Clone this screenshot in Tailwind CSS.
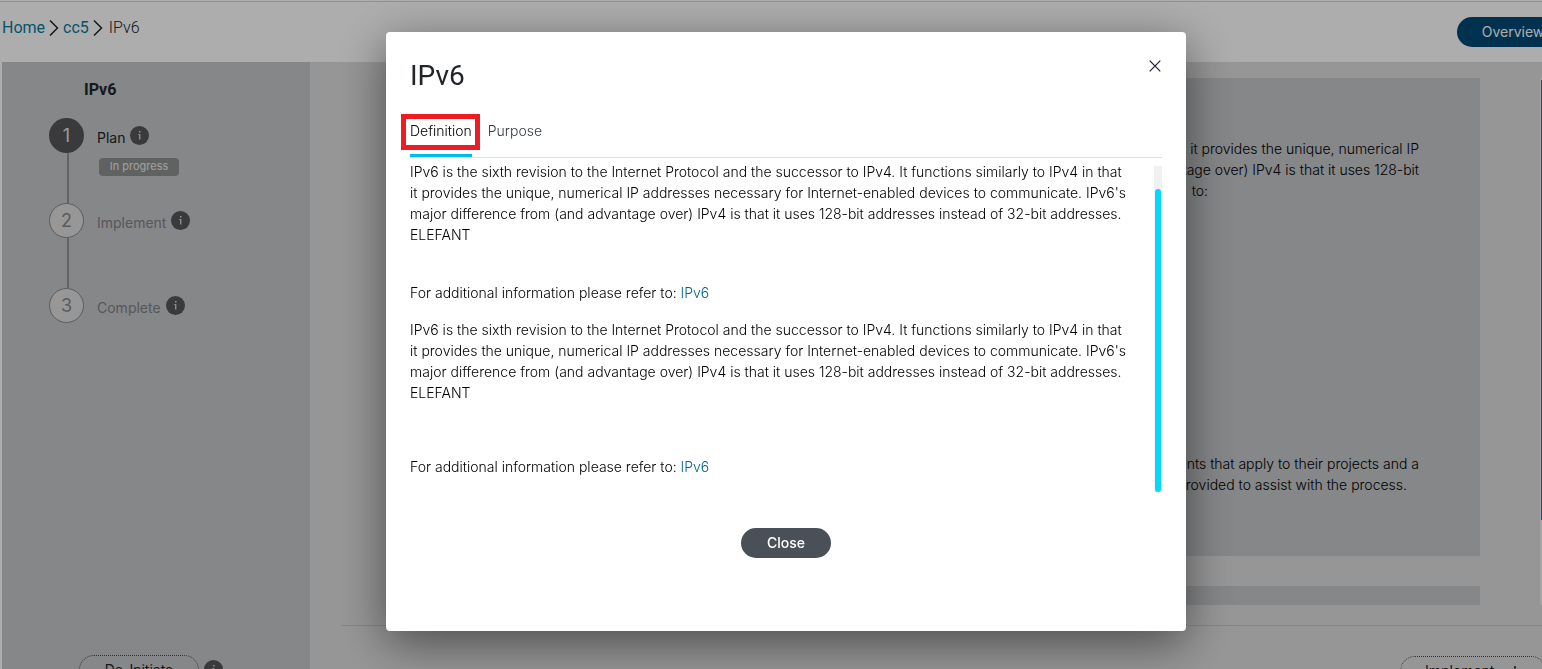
<!DOCTYPE html>
<html lang="en">
<head>
<meta charset="utf-8">
<title>IPv6</title>
<script src="https://cdn.jsdelivr.net/npm/@tailwindcss/browser@4"></script>
</head>
<body class="h-screen overflow-hidden bg-white font-['Inter',sans-serif] text-sm text-[#212529]">
<svg class="hidden">
  <symbol id="info" viewBox="0 0 19 19">
    <circle cx="9.5" cy="9.5" r="9.5" fill="#56565a"/>
    <path d="M9 5h1.6v1.6H9zM8.2 8h2.2v5.4H9V9h-.8z" fill="#d0d0d0"/>
  </symbol>
</svg>

<div class="flex h-screen flex-col overflow-hidden">
  <header class="mt-px flex h-[61px] shrink-0 items-start justify-between border-t border-[#d8d8d8] pl-0.5">
    <nav aria-label="Breadcrumb" class="mt-3.5 flex items-center text-base leading-6 font-['Roboto',sans-serif]">
      <a href="#" class="text-[#0a7aa0]">Home</a>
      <svg class="mx-1 h-4 w-2.5" viewBox="0 0 10 16" fill="none" stroke="#212529" stroke-width="1.5"><path d="M1 .5l7.500 7.500L1 15.500"/></svg>
      <a href="#" class="text-[#0a7aa0]">cc5</a>
      <svg class="mx-1 h-4 w-2.5" viewBox="0 0 10 16" fill="none" stroke="#212529" stroke-width="1.5"><path d="M1 .5l7.500 7.500L1 15.500"/></svg>
      <span class="pl-0.5 font-light">IPv6</span>
    </nav>
    <button class="mt-[15px] -mr-[27px] h-[30px] w-28 shrink-0 rounded-full bg-[#004974] text-sm text-white">Overview</button>
  </header>

  <div class="flex min-h-0 flex-1 pl-0.5">
    <aside class="flex w-[308px] shrink-0 flex-col bg-[#c5c7c9] pl-[47px]">
      <h2 class="mt-4 pl-[35px] text-base leading-6 font-bold font-['Roboto',sans-serif]">IPv6</h2>
      <ol class="mt-4">
        <li class="flex h-[85px] gap-[13px]">
          <div class="flex w-[35px] flex-col items-center">
            <span class="flex size-[35px] shrink-0 items-center justify-center rounded-full bg-[#56565a] text-lg text-[#e4e4e4]">1</span>
            <span class="ml-0.5 w-0.5 flex-1 bg-[#909294]"></span>
          </div>
          <div>
            <div class="mt-2 flex h-5 items-start gap-[5px] text-sm leading-6">Plan <svg class="size-[19px]" role="img" aria-label="Info"><use href="#info"/></svg></div>
            <span class="mt-3 ml-0.5 flex h-[18px] w-20 items-center justify-center rounded bg-[#8e8f90] text-[11px] text-[#ececec]">In progress</span>
          </div>
        </li>
        <li class="flex h-[85px] gap-[13px]">
          <div class="flex w-[35px] flex-col items-center">
            <span class="flex size-[35px] shrink-0 items-center justify-center rounded-full border border-[#85888b] bg-[#dfdfdf] text-lg text-[#85888b]">2</span>
            <span class="ml-0.5 w-0.5 flex-1 bg-[#909294]"></span>
          </div>
          <div class="mt-2 flex h-5 items-start gap-[5px] text-sm leading-6 text-[#7f8285]">Implement <svg class="size-[19px]" role="img" aria-label="Info"><use href="#info"/></svg></div>
        </li>
        <li class="flex h-[85px] gap-[13px]">
          <div class="flex w-[35px] flex-col items-center">
            <span class="flex size-[35px] shrink-0 items-center justify-center rounded-full border border-[#85888b] bg-[#dfdfdf] text-lg text-[#85888b]">3</span>
          </div>
          <div class="mt-2 flex h-5 items-start gap-[5px] text-sm leading-6 text-[#7f8285]">Complete <svg class="size-[19px]" role="img" aria-label="Info"><use href="#info"/></svg></div>
        </li>
      </ol>
      <div class="-mb-4 mt-auto flex shrink-0 items-start gap-[5px] pl-[30px]">
        <button class="h-[30px] w-[120px] rounded-full border border-dotted border-[#45484c] text-sm">De-Initiate</button>
        <svg class="mt-[5px] size-[19px]" role="img" aria-label="Info"><use href="#info"/></svg>
      </div>
    </aside>

    <main class="flex min-w-0 flex-1 flex-col bg-[#dedede] pt-4 pl-[31px]">
      <div class="flex h-[527px] shrink-0 justify-between pl-[60px]">
        <div class="mr-[60px] flex flex-1 flex-col overflow-hidden">
          <section class="h-[478px] shrink-0 bg-[#c5c7c9] pt-[60px] pr-[61px] text-right text-sm leading-[21px] font-light text-black">
            <p>that it provides the unique, numerical IP<br>advantage over) IPv4 is that it uses 128-bit<span class="block pr-[211px]">to:</span></p>
            <p class="mt-[252px]">requirements that apply to their projects and a<span class="block pr-3">provided to assist with the process.</span></p>
          </section>
          <section class="mt-[30px] h-[19px] bg-[#c5c7c9]"></section>
        </div>
        <div class="w-0.5 bg-[#f0f0f0] pt-0.5 pl-px"><div class="h-[440px] bg-[#0a86ac]"></div></div>
      </div>
      <div class="mt-5 border-t border-[#c4c4c4]"></div>
      <div class="mt-[30px] flex justify-end">
        <button class="-mr-1 flex h-[30px] w-[146px] shrink-0 items-center gap-4 rounded-full border border-dotted border-[#45484c] pl-6 text-sm">Implement
          <svg class="size-2.5" viewBox="0 0 10 10" fill="none" stroke="#212529" stroke-width="1.500"><path d="M5 0v9M1 5l4 4 4-4"/></svg>
        </button>
      </div>
    </main>
  </div>
</div>

<div class="fixed inset-0 flex items-start justify-center bg-black/32 pt-8 pl-[30px]">
  <div role="dialog" aria-modal="true" aria-labelledby="dlg-title" class="mb-9 w-[800px] rounded bg-white px-6 pb-[73px] shadow-[0_12px_48px_rgba(0,0,0,0.5)]">
    <div class="flex items-start justify-between pt-6">
      <h1 id="dlg-title" class="text-[28px] leading-10 font-['Roboto',sans-serif]">IPv6</h1>
      <button aria-label="Close dialog" class="mt-[3px] p-px"><svg class="size-3" viewBox="0 0 12 12" fill="none" stroke="#1c1c30" stroke-width="1.2"><path d="M.7 .7l10.600 10.600M11.300 .7L.7 11.300"/></svg></button>
    </div>
    <div role="tablist" class="mt-[25px] flex h-[37px] gap-4 border-b border-[#dee0e0] leading-5 font-light">
      <button role="tab" aria-selected="true" class="relative flex h-9 items-start border-b-[3px] border-[#00bceb] text-black">Definition
        <span class="absolute -top-[7px] -right-2 -left-[9px] h-9 border-5 border-[#ed1c24]"></span>
      </button>
      <button role="tab" aria-selected="false" class="flex items-start text-[#343a40]">Purpose</button>
    </div>
    <div class="mt-2 flex h-[326px] justify-between">
      <div class="leading-[21px] -mt-[5px] font-light whitespace-nowrap text-black">
        <p>IPv6 is the sixth revision to the Internet Protocol and the successor to IPv4. It functions similarly to IPv4 in that<br>it provides the unique, numerical IP addresses necessary for Internet-enabled devices to communicate. IPv6's<br>major difference from (and advantage over) IPv4 is that it uses 128-bit addresses instead of 32-bit addresses.<br>ELEFANT</p>
        <p class="mt-[37px]">For additional information please refer to: <a href="#" class="text-[#00668a]">IPv6</a></p>
        <p class="mt-4">IPv6 is the sixth revision to the Internet Protocol and the successor to IPv4. It functions similarly to IPv4 in that<br>it provides the unique, numerical IP addresses necessary for Internet-enabled devices to communicate. IPv6's<br>major difference from (and advantage over) IPv4 is that it uses 128-bit addresses instead of 32-bit addresses.<br>ELEFANT</p>
        <p class="mt-[53px]">For additional information please refer to: <a href="#" class="text-[#00668a]">IPv6</a></p>
      </div>
      <div class="w-2 bg-[#f1f1f1] pt-[23px] pl-px"><div class="h-full w-1.5 rounded-full bg-[#00d8ff]"></div></div>
    </div>
    <div class="mt-9 flex justify-center"><button class="h-[30px] w-[90px] rounded-full bg-[#495057] text-sm font-medium text-white">Close</button></div>
  </div>
</div>
</body>
</html>
